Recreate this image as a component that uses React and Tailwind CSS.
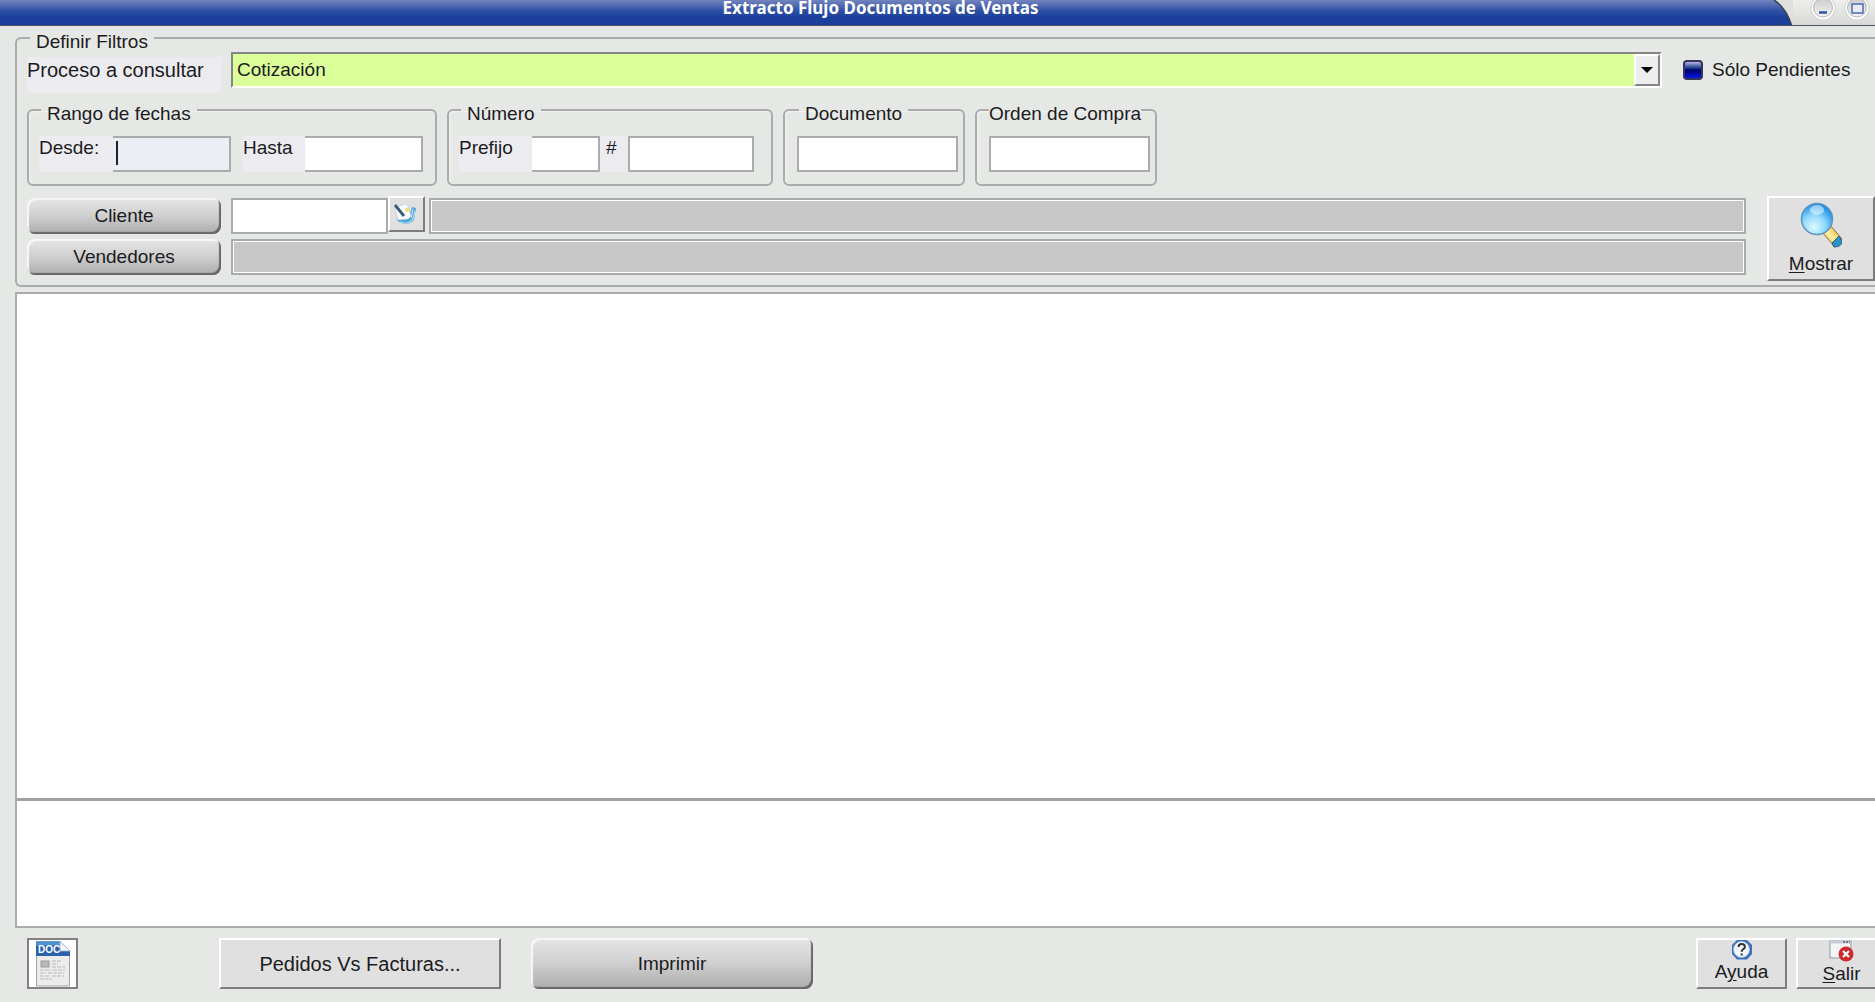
import React from 'react';
import { useState } from 'react';
import clsx from 'clsx';

const procesos = ['Cotización', 'Pedido', 'Remisión', 'Factura'];

const raised = 'border-2 border-t-white border-l-white border-r-[#7d7d7d] border-b-[#7d7d7d] bg-[#e0e0e0]';
const field = 'h-9 border-2 border-[#a9acab] px-1 outline-none';
const tag = 'h-9 shrink-0 bg-[#ecebf0]';

function Group({ title, tight, className, children }) {
  return (
    <fieldset className={clsx('h-[87px] min-w-0 rounded-md border-2 border-[#a9acab] pt-[15px] shadow-[inset_1px_1px_2px_#f3f4f3]', className)}>
      <legend className={clsx('pt-2 leading-[14px] whitespace-nowrap', !tight && 'ml-[2px] px-[6px]')}>{title}</legend>
      <div className="flex">{children}</div>
    </fieldset>
  );
}

function GlossyButton({ className, children }) {
  return (
    <button
      type="button"
      className={clsx(
        'rounded-lg bg-linear-to-b from-[#e6e6e6] via-[#cfcfcf] to-[#ababab] shadow-[inset_2px_2px_1px_#f7f7f7,inset_-2px_-2px_1px_#666]',
        className
      )}
    >
      {children}
    </button>
  );
}

function WindowButton({ label, children }) {
  return (
    <button type="button" aria-label={label} className="h-[25px] w-[34px]">
      <svg width="34" height="25" viewBox="0 0 34 25">
        <circle cx="17" cy="8" r="12.5" fill="#d3d5d3" />
        <circle cx="17" cy="8" r="11.5" fill="#fbfbfb" />
        <circle cx="17" cy="7.5" r="9.5" fill="url(#orb)" stroke="#b4b8b6" />
        {children}
      </svg>
    </button>
  );
}

function TitleBar() {
  return (
    <header className="flex h-[26px] overflow-hidden border-b border-[#4b5560] bg-[#dfe1de]">
      <div className="flex flex-1 justify-center bg-linear-to-b from-[#7384bd] via-[#2c4ea4] via-45% to-[#1c3f9b] to-70% pr-3">
        <h1 className="font-['Noto_Sans',sans-serif] text-[17px] leading-4 font-bold text-white">
          Extracto Flujo Documentos de Ventas
        </h1>
      </div>
      <svg width="20" height="25" viewBox="0 0 20 25">
        <defs>
          <linearGradient id="bar" x1="0" y1="0" x2="0" y2="1">
            <stop offset="0" stopColor="#7384bd" />
            <stop offset=".45" stopColor="#2c4ea4" />
            <stop offset=".7" stopColor="#1c3f9b" />
          </linearGradient>
          <linearGradient id="orb" x1="0" y1="0" x2="0" y2="1">
            <stop offset="0" stopColor="#c9cbc9" />
            <stop offset="1" stopColor="#f4f4f3" />
          </linearGradient>
        </defs>
        <path d="M0 0h1C9 5 15 14 18.500 25H0Z" fill="url(#bar)" />
        <path d="M1 0C9 5 15 14 18.500 25" fill="none" stroke="#3c4250" strokeWidth="1.500" />
      </svg>
      <div className="flex w-[82px] bg-linear-to-b from-[#eeefed] to-[#d8dad7] pl-[13px]">
        <WindowButton label="Minimizar">
          <path d="M13 12.500h8" stroke="#2f55a8" strokeWidth="2.500" />
        </WindowButton>
        <WindowButton label="Maximizar">
          <rect x="12" y="4" width="11" height="9" fill="#e8ebf3" stroke="#4a6bb5" strokeWidth="1.500" />
        </WindowButton>
      </div>
    </header>
  );
}

function NotebookIcon() {
  return (
    <svg width="24" height="22" viewBox="0 0 24 22">
      <path d="M4 17c4 5 14 5 17 0l2-12-4-1-3 10-12 1Z" fill="#4fa6d8" />
      <path d="M7 19c5 2 11 1 13-3M20 6l-2 9M22 8l-2 8" stroke="#b7e0f2" strokeWidth="1.200" fill="none" />
      <path d="M2 4l12-3 4 12-3 3-10 1Z" fill="#fafcff" stroke="#c2ccd6" strokeWidth=".7" />
      <path d="M2 2l9 11" stroke="#3a5b78" strokeWidth="2.800" />
      <circle cx="14" cy="7" r="2" fill="#f0df62" />
    </svg>
  );
}

function MagnifierIcon() {
  return (
    <svg width="42" height="46" viewBox="0 0 42 46">
      <defs>
        <radialGradient id="lens" cx=".4" cy=".75" r=".75">
          <stop offset="0" stopColor="#e0fbff" />
          <stop offset=".5" stopColor="#8ed8fb" />
          <stop offset="1" stopColor="#1488ea" />
        </radialGradient>
        <linearGradient id="grip" x1="0" y1="1" x2="1" y2="0">
          <stop offset="0" stopColor="#c78a1c" />
          <stop offset=".45" stopColor="#fff0a0" />
          <stop offset="1" stopColor="#d99a22" />
        </linearGradient>
      </defs>
      <path d="M22 30l8-7 12 14-8 7Z" fill="url(#grip)" stroke="#93743a" />
      <path d="M34 45l-2-4 7-7 3 5q0 6-8 6Z" fill="#2d93c9" stroke="#2a5f80" />
      <circle cx="17" cy="17" r="15.500" fill="url(#lens)" stroke="#5f93bb" strokeWidth="1.500" />
      <ellipse cx="17" cy="8" rx="7" ry="5" fill="#fff" opacity=".5" />
    </svg>
  );
}

function DocIcon() {
  return (
    <svg width="34" height="46" viewBox="0 0 34 46">
      <path d="M.5 1H24l9.500 9.500V45H.5Z" fill="#ececec" stroke="#a3a3a3" />
      <path d="M0 .5h24L34 10v5H0Z" fill="#2b62ac" />
      <path d="M0 .5h24l4 4H0Z" fill="#4f92d4" />
      <path d="M24 .5V10h10Z" fill="#f4f8fb" stroke="#9ab5cf" strokeWidth=".8" />
      <text x="2" y="12" fontFamily="Liberation Sans, sans-serif" fontSize="10" fontWeight="700" fill="#fff">
        DOC
      </text>
      <rect x="5" y="20" width="8" height="6" fill="#b9b9b9" stroke="#999" />
      <path
        d="M16 20h9M16 23h6M16 26h13M4 29h11m2 0h12M4 32h6m2 0h16M4 35h9m3 0h12M4 38h12"
        stroke="#b9b9b9"
        strokeWidth="1.200"
        strokeDasharray="4 1"
      />
    </svg>
  );
}

function HelpIcon() {
  return (
    <svg width="22" height="20" viewBox="0 0 22 20">
      <path d="M6 0h10l5 5v9l-5 5.500H6L1 14V5Z" fill="#3d6fb8" />
      <circle cx="10.500" cy="9.500" r="8" fill="#f4f7fc" stroke="#9dbbe2" />
      <path d="M7.500 7q0-3 3.200-3t3.200 2.700q0 1.600-1.600 2.400t-1.600 2.700M10.700 13.500v2" fill="none" stroke="#333" strokeWidth="2" />
    </svg>
  );
}

function ExitIcon() {
  return (
    <svg width="26" height="22" viewBox="0 0 26 22">
      <rect x="1" y="1" width="21" height="17" fill="#f5f5f8" stroke="#9297a3" />
      <path d="M1 2h21" stroke="#c9cdd8" strokeWidth="3" />
      <path d="M14 2h7" stroke="#5b6274" strokeWidth="1.500" strokeDasharray="2 1" />
      <circle cx="17" cy="14" r="7.500" fill="#cc2a2f" />
      <path d="M14 11l6 6M20 11l-6 6" stroke="#fff" strokeWidth="2.200" />
    </svg>
  );
}

function Filters() {
  const [proceso, setProceso] = useState(procesos[0]);

  return (
    <fieldset className="ml-[15px] min-w-0 rounded-l-md border-2 border-r-0 border-[#a9acab] pb-1 pl-[10px]">
      <legend className="ml-[3px] px-[6px] pt-2 leading-4">Definir Filtros</legend>

      <div className="mt-[2px] flex">
        <label htmlFor="proceso" className="mt-[5px] h-9 w-[194px] shrink-0 bg-[#ecebf0] text-[20px] leading-[26px]">
          Proceso a consultar
        </label>
        <div className="relative ml-[10px] h-9 flex-1 border-2 border-t-[#858585] border-l-[#858585] border-r-white border-b-white">
          <select
            id="proceso"
            value={proceso}
            onChange={(e) => setProceso(e.target.value)}
            className="h-full w-full appearance-none bg-[#dbff99] pl-1 outline-none"
          >
            {procesos.map((p) => (
              <option key={p}>{p}</option>
            ))}
          </select>
          <span className="pointer-events-none absolute inset-y-0 right-0 flex w-[26px] items-center justify-center border-2 border-t-white border-l-white border-r-[#858585] border-b-[#858585] bg-[#eee]">
            <svg width="12" height="6" viewBox="0 0 12 6">
              <path d="M0 0h12L6 6Z" fill="#000" />
            </svg>
          </span>
        </div>
        <label className="ml-[21px] flex h-9 w-[192px] shrink-0 items-center gap-[9px]">
          <input
            type="checkbox"
            className="h-5 w-5 appearance-none rounded border-2 border-[#34345c] bg-linear-to-b from-[#b4b8e4] via-[#00006c] via-50% to-[#0018e0]"
          />
          Sólo Pendientes
        </label>
      </div>

      <div className="mt-[6px] flex gap-[10px]">
        <Group title="Rango de fechas" className="w-[410px] pl-[10px]">
          <label htmlFor="desde" className={clsx(tag, 'w-[74px]')}>Desde:</label>
          <div className="relative">
            <input id="desde" className={clsx(field, 'w-[118px] border-l-0 bg-[#eceef5]')} />
            <span className="absolute top-[5px] left-[3px] h-6 w-[2px] bg-[#222]" />
          </div>
          <label htmlFor="hasta" className={clsx(tag, 'ml-3 w-[62px]')}>Hasta</label>
          <input id="hasta" className={clsx(field, 'w-[118px] border-l-0 bg-white')} />
        </Group>
        <Group title="Número" className="w-[326px] pl-[10px]">
          <label htmlFor="prefijo" className={clsx(tag, 'w-[73px]')}>Prefijo</label>
          <input id="prefijo" className={clsx(field, 'w-[68px] border-l-0 bg-white')} />
          <label htmlFor="numero" className={clsx(tag, 'w-[28px] pl-[6px]')}>#</label>
          <input id="numero" className={clsx(field, 'w-[126px] bg-white')} />
        </Group>
        <Group title="Documento" className="w-[182px] pl-3">
          <input aria-label="Documento" className={clsx(field, 'w-[161px] bg-white')} />
        </Group>
        <Group title="Orden de Compra" tight className="w-[182px] pl-3">
          <input aria-label="Orden de Compra" className={clsx(field, 'w-[161px] bg-white')} />
        </Group>
      </div>

      <div className="mt-[10px] flex">
        <div className="flex flex-1 flex-col gap-[5px] pt-[2px]">
          <div className="flex">
            <GlossyButton className="h-9 w-[194px]">Cliente</GlossyButton>
            <input aria-label="Código del cliente" className={clsx(field, 'ml-[10px] w-[157px] bg-white')} />
            <button type="button" aria-label="Buscar cliente" className={clsx(raised, '-mt-[2px] flex h-9 w-[37px] items-center justify-center pr-1')}>
              <NotebookIcon />
            </button>
            <input aria-label="Nombre del cliente" readOnly className={clsx(field, 'ml-1 flex-1 bg-[#c7c7c7] shadow-[inset_0_0_0_1px_#fff]')} />
          </div>
          <div className="flex">
            <GlossyButton className="h-9 w-[194px]">Vendedores</GlossyButton>
            <input aria-label="Nombre del vendedor" readOnly className={clsx(field, 'ml-[10px] flex-1 bg-[#c7c7c7] shadow-[inset_0_0_0_1px_#fff]')} />
          </div>
        </div>
        <button type="button" className={clsx(raised, 'ml-[21px] flex h-[85px] w-[108px] flex-col items-center gap-1 pt-1')}>
          <MagnifierIcon />
          <span className="leading-6"><u className="underline-offset-2">M</u>ostrar</span>
        </button>
      </div>
    </fieldset>
  );
}

export default function App() {
  return (
    <div className="flex min-h-screen flex-col overflow-hidden bg-[#e6e8e5] font-['Liberation_Sans',Arial,sans-serif] text-[19px] leading-6 text-[#1b1b22]">
      <TitleBar />
      <Filters />

      <main className="mt-[5px] ml-[15px] flex flex-1 flex-col border-2 border-r-0 border-[#a9acab] bg-white">
        <section aria-label="Documentos" className="flex-1 border-b-3 border-[#a1a3a2]" />
        <section aria-label="Detalle" className="h-[125px]" />
      </main>

      <footer className="flex pt-[10px] pb-[13px] pl-[27px]">
        <button type="button" aria-label="Exportar a DOC" className="flex h-[51px] w-[51px] items-center justify-center border-2 border-[#828282] bg-white">
          <DocIcon />
        </button>
        <button type="button" className={clsx(raised, 'ml-[141px] h-[51px] w-[282px] text-[20px]')}>Pedidos Vs Facturas...</button>
        <GlossyButton className="ml-[30px] h-[51px] w-[282px]">Imprimir</GlossyButton>
        <button type="button" className={clsx(raised, 'ml-auto flex h-[51px] w-[91px] flex-col items-center')}>
          <HelpIcon />
          <span>A<u className="underline-offset-2">y</u>uda</span>
        </button>
        <button type="button" className={clsx(raised, 'ml-[9px] flex h-[51px] w-[79px] flex-col items-center border-r-0 pl-[10px]')}>
          <ExitIcon />
          <span><u className="underline-offset-2">S</u>alir</span>
        </button>
      </footer>
    </div>
  );
}
